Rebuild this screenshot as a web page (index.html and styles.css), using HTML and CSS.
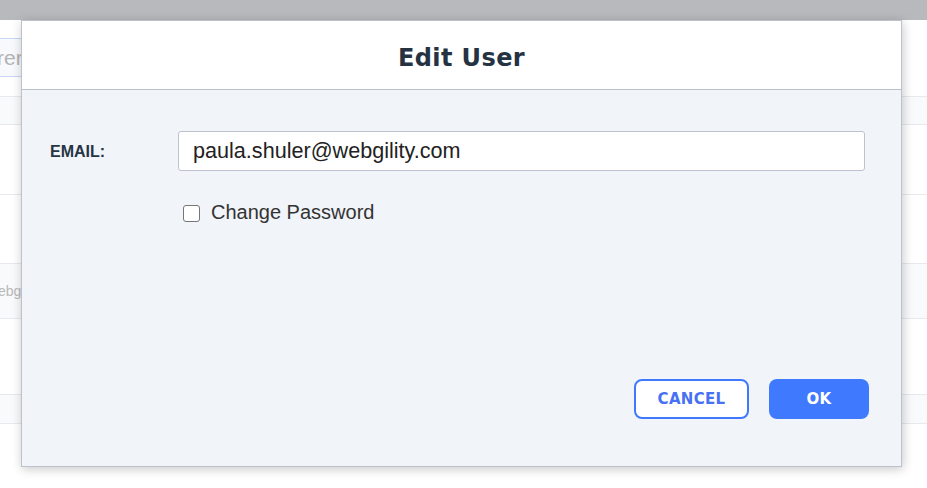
FILE: index.html
```html
<!DOCTYPE html>
<html lang="en">
<head>
  <meta charset="UTF-8" />
  <meta name="viewport" content="width=device-width, initial-scale=1.0"/>
  <title>Edit User</title>
  <link rel="stylesheet" href="styles.css">
</head>
<body>
  <div class="topbar"></div>

  <div class="page">
    <div class="search-row">
      <div class="search-box">rer</div>
    </div>
    <div class="row row-head first"></div>
    <div class="row row-tall"></div>
    <div class="row row-tall second"></div>
    <div class="row row-stripe"><span class="cell-text">ebgility.com</span></div>
    <div class="row row-big"></div>
    <div class="row row-head"></div>
    <div class="row"></div>
  </div>

  <div class="modal">
    <div class="modal-header">
      <h2>Edit User</h2>
    </div>
    <div class="modal-body">
      <div class="form-row">
        <label for="email" class="field-label">EMAIL:</label>
        <input type="text" id="email" class="field-input" value="paula.shuler@webgility.com" />
      </div>
      <div class="check-row">
        <input type="checkbox" id="changePwd" class="check" />
        <label for="changePwd">Change Password</label>
      </div>
      <div class="modal-footer">
        <button class="btn btn-outline">CANCEL</button>
        <button class="btn btn-primary">OK</button>
      </div>
    </div>
  </div>
</body>
</html>
```

FILE: styles.css
```css
body {
  margin: 0;
  width: 927px;
  height: 488px;
  overflow: hidden;
  background: #ffffff;
  font-family: "Liberation Sans", Arial, sans-serif;
  position: relative;
}

.topbar {
  height: 20px;
  background: #b8b9bc;
}

/* page behind the dialog */
.search-row {
  height: 76px;
  padding-top: 18px;
  box-sizing: border-box;
}

.search-box {
  width: 200px;
  height: 39px;
  box-sizing: border-box;
  border-top: 1px solid #c9d5f5;
  border-bottom: 1px solid #c9d5f5;
  background: #f8f9fc;
  color: #b3b3b3;
  font-size: 21px;
  line-height: 37px;
  text-indent: -3px;
}

.row {
  border-top: 1px solid #e7e9ef;
  height: 65px;
}

.row-head {
  height: 28px;
  background: #f9fafc;
}

.row-head.first {
  height: 27px;
}

.row-tall {
  height: 69px;
}

.row-tall.second {
  height: 68px;
}

.row-stripe {
  height: 54px;
  background: #f9fafc;
  display: flex;
  align-items: center;
}

.row-big {
  height: 75px;
}

.cell-text {
  color: #b8b8b8;
  font-size: 14px;
  text-indent: -2px;
  display: block;
}

/* dialog */
.modal {
  position: absolute;
  left: 21px;
  top: 20px;
  width: 881px;
  height: 447px;
  box-sizing: border-box;
  border: 1px solid #bcc1cb;
  background: #f1f4f8;
  box-shadow: 1px 2px 10px rgba(0,0,0,0.22);
  display: flex;
  flex-direction: column;
}

.modal-header {
  height: 68px;
  background: #ffffff;
  border-bottom: 1px solid #bac1cd;
  display: flex;
  align-items: center;
  justify-content: center;
}

.modal-header h2 {
  margin: 0;
  font-family: "DejaVu Sans", sans-serif;
  font-size: 24px;
  letter-spacing: 0.4px;
  color: #253242;
  padding-top: 5px;
}

.modal-body {
  flex: 1;
  display: flex;
  flex-direction: column;
  padding: 41px 32px 47px 28px;
}

.form-row {
  display: flex;
  align-items: center;
  margin-right: 4px;
}

.field-label {
  width: 128px;
  font-weight: bold;
  font-size: 16px;
  color: #263445;
  padding-top: 2px;
}

.field-input {
  flex: 1;
  height: 40px;
  box-sizing: border-box;
  border: 1px solid #bcc3cf;
  border-radius: 3px;
  padding: 0 14px;
  font-family: "Liberation Sans", Arial, sans-serif;
  font-size: 21.6px;
  color: #222;
  background: #ffffff;
}

.check-row {
  display: flex;
  align-items: center;
  margin-top: 30px;
  margin-left: 133px;
  font-size: 20px;
  color: #333;
}

.check {
  appearance: none;
  width: 17px;
  height: 17px;
  margin: 1px 11px 0 0;
  border: 1.5px solid #767676;
  border-radius: 3px;
  background: #ffffff;
}

.modal-footer {
  margin-top: auto;
  display: flex;
  justify-content: flex-end;
  gap: 20px;
}

.btn {
  height: 40px;
  border-radius: 8px;
  font-family: "DejaVu Sans", sans-serif;
  font-weight: bold;
  font-size: 15px;
  letter-spacing: 0.3px;
  cursor: pointer;
}

.btn-outline {
  width: 115px;
  background: #ffffff;
  border: 2px solid #3f7afe;
  color: #4770f5;
}

.btn-primary {
  width: 100px;
  background: #3f7afe;
  border: none;
  color: #ffffff;
}
```
